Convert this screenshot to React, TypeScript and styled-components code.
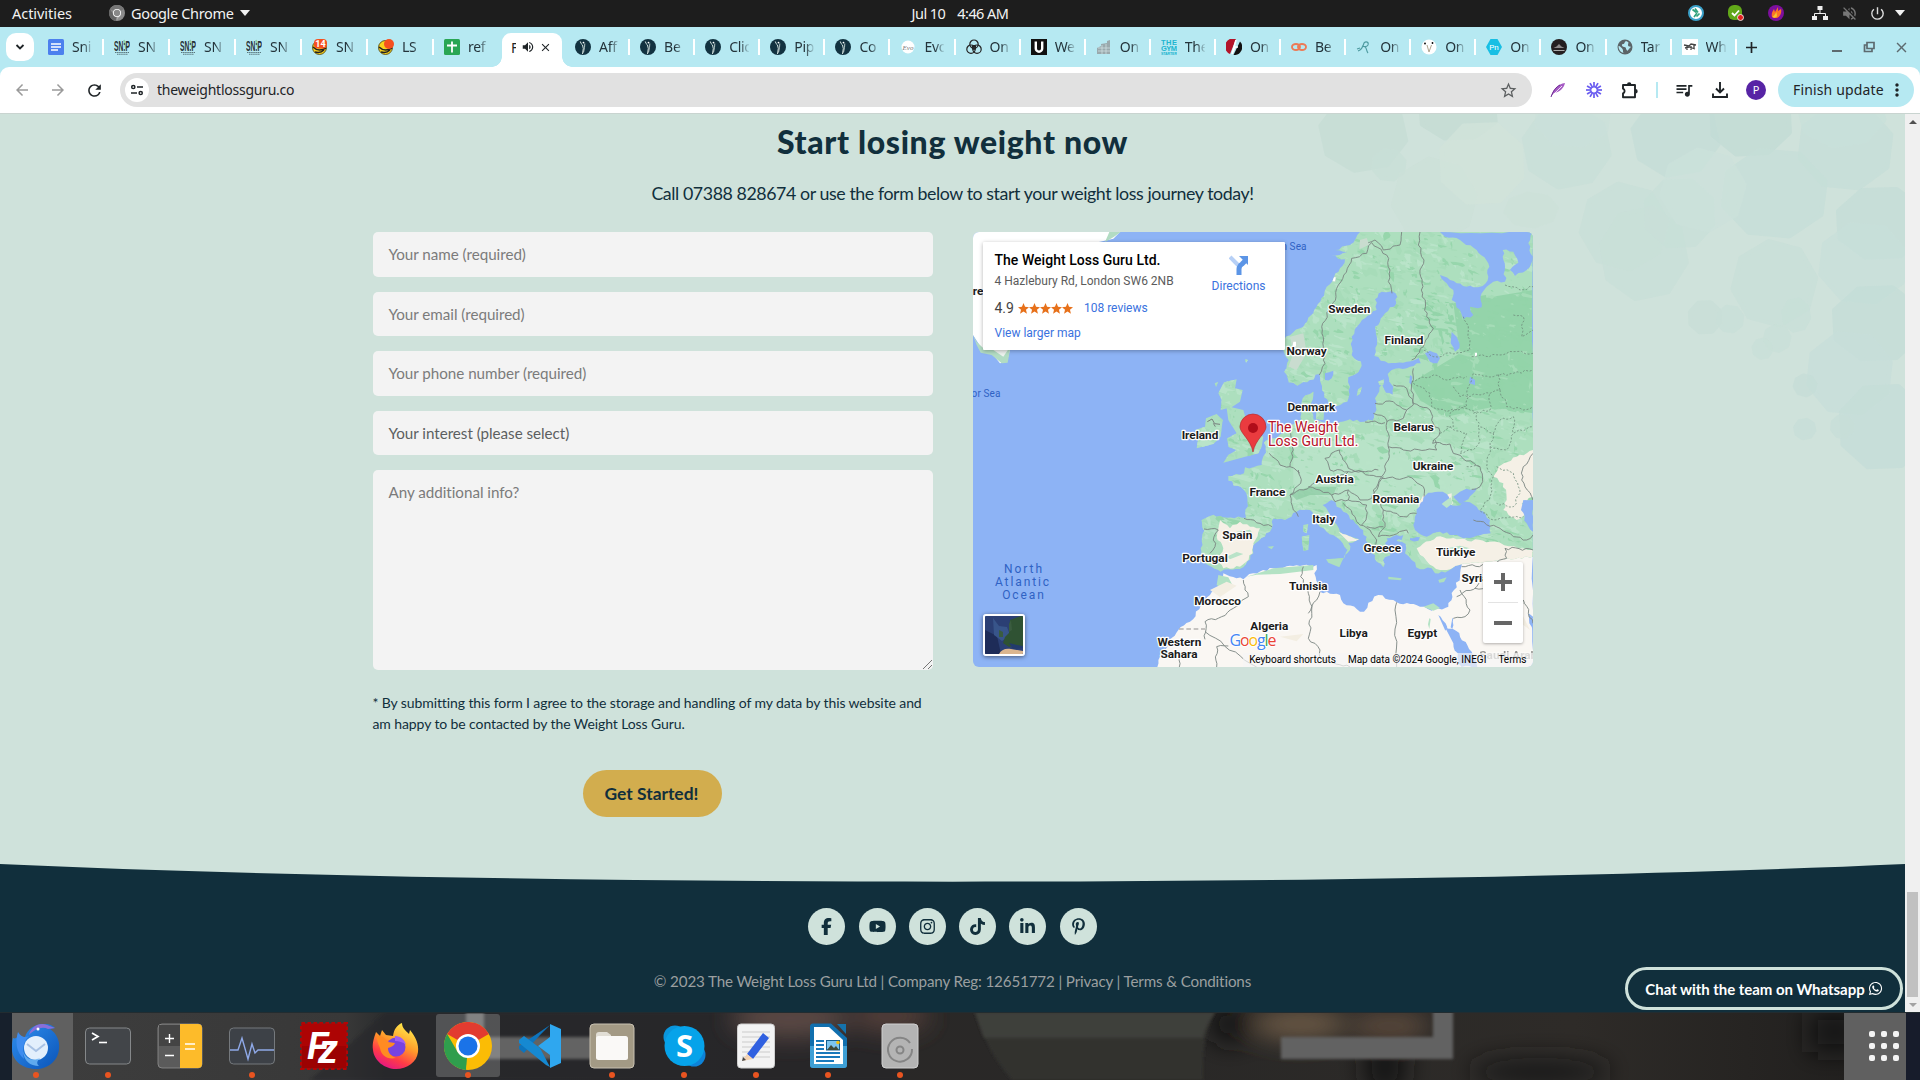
import React from "react";
import styled, { createGlobalStyle, css } from "styled-components";
import { FaFacebookF, FaYoutube, FaInstagram, FaTiktok, FaLinkedinIn, FaPinterestP, FaWhatsapp } from "react-icons/fa6";
import {
  MdArrowBack, MdArrowForward, MdRefresh, MdStarBorder, MdQueueMusic,
  MdMoreVert, MdVolumeUp, MdVolumeOff, MdClose, MdPublic, MdPowerSettingsNew,
} from "react-icons/md";

const mint = "#cfe2db";
const navy = "#112f3c";
const ui = `"Noto Sans", "Open Sans", sans-serif`;
const lato = `Lato, "Open Sans", sans-serif`;

const Global = createGlobalStyle`
  * { box-sizing: border-box; }
  body { margin: 0; overflow: hidden; background: #1d1d1d; }
  svg { display: block; flex: none; }
`;

const Screen = styled.div`
  width: 1920px; height: 1080px; display: flex; flex-direction: column; overflow: hidden;
`;

/* ---------- system bar ---------- */
const SystemBar = styled.header`
  height: 27px; flex: none; background: #1d1d1d; color: #f2f2f2; font: 400 14.5px ${ui};
  display: grid; grid-template-columns: 1fr auto 1fr; align-items: center; padding: 0 12px; padding-bottom: 1px;
`;
const SystemLeft = styled.div`display: flex; align-items: center;`;
const Activities = styled.span`width: 97px; letter-spacing: -0.05px;`;
const AppName = styled.span`margin: 0 6px 0 6px; letter-spacing: -0.35px;`;
const Clock = styled.div`display: flex; gap: 12px; letter-spacing: -0.55px;`;
const Tray = styled.div`display: flex; justify-content: flex-end; align-items: center;`;
const TraySlot = styled.span<{ $w: number }>`width: ${(p) => p.$w}px; display: flex; justify-content: center;`;
const Caret = styled.i`border: 5px solid transparent; border-top: 6px solid #f2f2f2; border-bottom: 0;`;

/* ---------- tab strip ---------- */
const Frame = styled.div`background: #b6e9f2; flex: none;`;
const TabStrip = styled.div`
  height: 40px; display: flex; padding-left: 6px; font: 400 14px ${ui}; color: #24343b;
`;
const TabSearch = styled.div`
  width: 28px; height: 28px; margin: 6px 4px 0 0; border-radius: 10px; background: #fff;
  display: flex; align-items: center; justify-content: center;
`;
const Tab = styled.div<{ $w: number; $sep: boolean }>`
  width: ${(p) => p.$w}px; flex: none; height: 16px; margin-top: 12px; padding-left: 10px;
  display: flex; align-items: center; gap: 8px; border-right: 2px solid ${(p) => (p.$sep ? "#fff" : "transparent")};
`;
const TabTitle = styled.span`
  width: 20px; overflow: hidden; white-space: nowrap; letter-spacing: -0.3px; line-height: 20px;
  mask-image: linear-gradient(90deg, #000 55%, transparent 105%);
`;
const ActiveTab = styled.div`
  width: 60px; height: 34px; margin: 6px 3px 0 2px; background: #fff; border-radius: 9px 9px 0 0; position: relative;
  display: flex; align-items: center; padding: 0 10px 6px 9px; justify-content: space-between; color: #1f2427;
  &::before, &::after {
    content: ""; position: absolute; bottom: 0; width: 10px; height: 10px;
  }
  &::before { left: -10px; background: radial-gradient(circle at 0 0, transparent 9.5px, #fff 10px); }
  &::after { right: -10px; background: radial-gradient(circle at 100% 0, transparent 9.5px, #fff 10px); }
`;
const Clip = styled.span`width: 5px; overflow: hidden;`;
const NewTab = styled.div`
  width: 30px; height: 40px; display: flex; align-items: center; justify-content: center;
`;
const WindowControls = styled.div`
  margin-left: auto; padding: 0 10px; display: flex; gap: 16px; align-items: center; color: #5d6a6f;
`;

/* ---------- toolbar ---------- */
const Toolbar = styled.div`
  height: 47px; background: #fff; border-radius: 9px 9px 0 0; border-bottom: 1px solid #c9d4d0;
  display: flex; align-items: center; padding: 0 6px 0 4px; font: 400 14px ${ui}; color: #1f2427;
`;
const ToolSlot = styled.div<{ $w?: number; $muted?: boolean }>`
  width: ${(p) => p.$w ?? 36}px; flex: none; display: flex; justify-content: center; align-items: center;
  color: ${(p) => (p.$muted ? "#9a9a9a" : "#1f2427")};
`;
const Omnibox = styled.div`
  width: 1412px; height: 34px; margin: 0 8px 0 8px; border-radius: 17px; background: #e1e1e1; flex: none;
  display: flex; align-items: center; padding: 0 14px 0 5px;
`;
const SiteInfo = styled.span`
  width: 24px; height: 24px; border-radius: 50%; background: #fff; margin-right: 8px;
  display: flex; align-items: center; justify-content: center;
`;
const Address = styled.span`flex: 1; letter-spacing: -0.25px; padding-bottom: 2px;`;
const Divider = styled.span`width: 2px; height: 16px; background: #b6e9f2; margin: 0 8px;`;
const Avatar = styled.span`
  width: 20px; height: 20px; border-radius: 50%; background: #5724a5; color: #fff; font: 400 11px/20px ${ui}; text-align: center;
`;
const UpdateButton = styled.div`
  width: 136px; height: 34px; margin-left: 4px; border-radius: 17px; background: #b6e9f2; flex: none;
  display: flex; align-items: center; justify-content: space-between; padding: 0 7px 0 15px; letter-spacing: 0.15px; white-space: nowrap;
`;
const UpdateText = styled.span`padding-bottom: 2px;`;

/* ---------- page ---------- */
const Viewport = styled.div`height: 898px; display: flex; flex: none;`;
const Page = styled.main`
  width: 1905px; height: 898px; background: ${mint}; position: relative; overflow: hidden; display: flex; flex-direction: column;
  font-family: ${lato}; color: ${navy};
`;
const Backdrop = styled.svg`position: absolute; right: 0; top: 0; filter: blur(.6px);`;
const Heading = styled.h2`
  margin: 7px 0 0; text-align: center; font: 900 32px/42px ${lato}; letter-spacing: 0.65px; position: relative;
`;
const Lead = styled.p`
  margin: 18px 0 0; text-align: center; font-size: 17.8px; line-height: 24px; letter-spacing: -0.42px; position: relative;
`;
const Columns = styled.section`
  display: grid; grid-template-columns: 560px 560px; gap: 40px; justify-content: center; margin-top: 27px; height: 632px; position: relative;
`;
const Form = styled.form`display: flex; flex-direction: column; gap: 15px;`;
const Field = styled.div<{ $dark?: boolean }>`
  height: 44.6px; flex: none; border-radius: 5px; background: #f3f3f3; color: ${(p) => (p.$dark ? "#5c5f61" : "#7b7b7b")};
  font-size: 15.2px; line-height: 44px; padding: 0 16px; letter-spacing: -0.03px;
`;
const Area = styled(Field)`
  height: 200px; position: relative; margin-bottom: 7px;
`;
const Grip = styled.svg`position: absolute; right: 1px; bottom: 1px;`;
const Consent = styled.p`margin: 0; font-size: 14px; line-height: 21px; letter-spacing: -0.1px; white-space: nowrap;`;
const Submit = styled.div`
  align-self: center; width: 139px; height: 47px; margin-top: 21px; border-radius: 24px; background: #d2ad4e;
  font-weight: 700; font-size: 17.4px; line-height: 47px; text-align: center; padding-right: 2px;
`;
const Footer = styled.footer`
  flex: 1; display: flex; flex-direction: column; align-items: center; position: relative;
`;
const FooterShape = styled.svg`position: absolute; inset: 0;`;
const Socials = styled.div`display: flex; gap: 13.3px; margin-top: 44px; position: relative;`;
const Social = styled.span`
  width: 37px; height: 37px; border-radius: 50%; background: ${mint}; color: ${navy};
  display: flex; align-items: center; justify-content: center; font-size: 17px;
`;
const Legal = styled.p`
  margin: 25px 0 0; color: #9b9fa0; font-size: 15.2px; line-height: 22px; letter-spacing: -0.15px; position: relative; white-space: nowrap;
`;
const ChatPill = styled.div`
  position: absolute; left: 1625px; top: 853px; width: 278px; height: 43px; border-radius: 22px; border: 3px solid ${mint};
  background: ${navy}; color: #fff; font: 700 15px ${lato}; letter-spacing: -0.04px; display: flex; align-items: center; justify-content: center; gap: 3px; white-space: nowrap;
`;
const Scrollbar = styled.div`
  width: 15px; background: #f0f0f0; display: flex; flex-direction: column; align-items: center; padding: 6px 0 5px;
`;
const Arrow = styled.i<{ $down?: boolean }>`
  border: 4px solid transparent;
  ${(p) => p.$down ? css`border-top-color: #a3a3a3; border-bottom: 0;` : css`border-bottom-color: #505050; border-top: 0;`}
`;
const Thumb = styled.div`width: 11px; height: 105px; margin: auto 0 6px; background: #c1c1c1;`;

/* ---------- map ---------- */
const MapFrame = styled.div`
  width: 560px; height: 435px; border-radius: 6px; overflow: hidden; position: relative; background: #8db3f5;
  font-family: Roboto, sans-serif;
`;
const PlaceCard = styled.div`
  position: absolute; left: 10px; top: 10px; width: 302px; height: 108px; background: #fff; box-shadow: 0 1px 4px rgba(0,0,0,.3);
  padding: 10px 19px 0 12px; display: flex; justify-content: space-between; border-radius: 1px;
`;
const PlaceText = styled.div`display: flex; flex-direction: column; white-space: nowrap;`;
const PlaceName = styled.b`font: 500 14px/17px Roboto; color: #000; letter-spacing: 0.03px;`;
const PlaceAddress = styled.span`font-size: 12px; line-height: 16px; margin-top: 4px; color: #5b5b5b;`;
const RatingRow = styled.div`display: flex; align-items: center; margin-top: 10px; font-size: 14px; line-height: 18px; color: #444;`;
const Stars = styled.span`display: flex; margin: 0 11px 0 4px;`;
const Blue = styled.span`font-size: 12px; color: #3a72de;`;
const LargerMap = styled(Blue)`margin-top: 9px; line-height: 15px;`;
const Directions = styled.div`display: flex; flex-direction: column; align-items: center; gap: 3px; padding-top: 2px;`;
const ZoomBox = styled.div`
  position: absolute; right: 10px; bottom: 24px; width: 40px; height: 81px; background: #fff; border-radius: 2px; box-shadow: 0 1px 3px rgba(0,0,0,.3);
`;
const Satellite = styled.div`
  position: absolute; left: 10px; bottom: 11px; width: 42px; height: 42px; border: 2px solid #fff; border-radius: 3px; box-shadow: 0 1px 4px rgba(0,0,0,.5); overflow: hidden;
`;
const MapCredits = styled.div`
  position: absolute; right: 0; bottom: 0; height: 14px; padding: 0 6px; background: rgba(245,245,245,.7); font-size: 10px; line-height: 14px; color: #000;
  display: flex; gap: 12px; white-space: nowrap;
`;
const Label = styled.text`
  font: 700 11.8px Roboto, sans-serif; fill: #1c1c1c; stroke: #fff; stroke-width: 2.4px; paint-order: stroke; text-anchor: middle; stroke-linejoin: round;
`;
const FadedLabel = styled(Label)`opacity: .45;`;
const SeaLabel = styled.text<{ $wide?: boolean }>`
  font: 400 ${(p) => (p.$wide ? 12 : 10)}px Roboto, sans-serif; fill: #2f62c4; text-anchor: middle; letter-spacing: ${(p) => (p.$wide ? "1.9px" : "0.1px")};
`;
const PinLabel = styled.text`
  font: 400 14px Roboto, sans-serif; fill: #b5122a; stroke: #fff; stroke-width: 2.6px; paint-order: stroke; stroke-linejoin: round;
`;
const GoogleMark = styled.text`font: 500 16px "Open Sans", sans-serif; stroke: #fff; stroke-width: 1.6px; paint-order: stroke;`;

/* ---------- dock ---------- */
const Dock = styled.nav`height: 68px; flex: none; position: relative; background: #2b2b2b; display: flex; overflow: hidden;`;
const Wallpaper = styled.svg`position: absolute; inset: 0;`;
const DockCell = styled.div<{ $active?: boolean }>`
  width: 64px; height: 63px; margin: 2px 4px; flex: none; display: flex; flex-direction: column; align-items: center; padding-top: 8px; position: relative;
  border-radius: 3px; background: ${(p) => (p.$active ? "rgba(255,255,255,.2)" : "none")};
`;
const RunDot = styled.i`width: 6px; height: 6px; border-radius: 50%; background: #e95420; margin-top: 2px; flex: none;`;
const AppGrid = styled.div`
  margin: 19px 21px 0 auto; display: grid; grid-template-columns: repeat(3, 6px); grid-auto-rows: 6px; gap: 6px; position: relative;
`;
const GridDot = styled.i`background: #f4f4f4; border-radius: 2px;`;

/* ---------- favicons ---------- */
const Ico = ({ children, s = 16, v = "0 0 16 16" }: { children: React.ReactNode; s?: number; v?: string }) => (
  <svg width={s} height={s} viewBox={v}>{children}</svg>
);
const Docs = () => <Ico><rect width="16" height="16" rx="1.5" fill="#4c80ee" /><path d="M3 5h10M3 8h10M3 11h7" stroke="#fff" strokeWidth="1.5" /></Ico>;
const Snip = () => (
  <Ico>
    <path d="M10 1l2 9" stroke="#8fd0a5" strokeWidth="1.5" />
    <text x="0" y="11.500" fontFamily="Liberation Sans" fontWeight="700" fontSize="14" textLength="16" lengthAdjust="spacingAndGlyphs" fill="#263136">SN:P</text>
    <path d="M1 13.5h14M3 15.3h11" stroke="#59777d" strokeWidth="1.1" strokeDasharray="1.5 .6" />
  </Ico>
);
const Duck = ({ n }: { n?: string }) => (
  <Ico>
    <circle cx="7.5" cy="8.5" r="7" fill="#f7d21c" stroke="#4b3c0b" strokeWidth=".8" />
    <path d="M1 8c4 4 8 4 13 1M3 13c4 1 7 0 9-2" stroke="#222" strokeWidth="1.5" fill="none" />
    {n ? <rect x="2" y="0" width="13" height="9.500" rx="4" fill="#f5501f" /> : <circle cx="11" cy="5" r="5" fill="#f5501f" />}
    {n && <text x="8.500" y="8" textAnchor="middle" fontFamily="Roboto" fontWeight="700" fontSize="9" fill="#fff">{n}</text>}
  </Ico>
);
const Sheets = () => <Ico><rect width="16" height="16" rx="1.5" fill="#2aa653" /><path d="M8 2.5v11M3 6.5h10" stroke="#fff" strokeWidth="1.8" /></Ico>;
const Guru = () => (
  <Ico><circle cx="8" cy="8" r="8" fill="#123240" /><path d="M5.300 2.500q.5 2.500 2.200 3.500l.8 3.500-.8 5.500" stroke="#d8e6e2" strokeWidth="1" fill="none" /><path d="M9.800 4.500l-.3 4-1 5" stroke="#d8e6e2" strokeWidth=".8" fill="none" /><circle cx="8.500" cy="3.600" r=".9" fill="#fff" /></Ico>
);
const Evo = () => <Ico><circle cx="8" cy="8" r="6.5" fill="#fff" /><text x="8" y="10.5" textAnchor="middle" fontFamily="Liberation Serif" fontStyle="italic" fontSize="7" fill="#777">Evo</text></Ico>;
const Trio = () => <Ico><g fill="none" stroke="#222" strokeWidth="1.2"><circle cx="8" cy="5.2" r="4.2" /><circle cx="5" cy="10.2" r="4.2" /><circle cx="11" cy="10.2" r="4.2" /><circle cx="8" cy="8.5" r="1.8" /></g></Ico>;
const Under = () => <Ico><rect width="16" height="16" fill="#111" /><path d="M4.8 2.5v7a3.2 3.2 0 0 0 6.4 0v-7" stroke="#fff" strokeWidth="2.4" fill="none" /></Ico>;
const Building = () => <Ico><path d="M1 15V9l4-2V5l6-1V2l3-1v14z" fill="#9aa9ad" /><path d="M2 9h12M2 12h12M6 6v9M10 5v10" stroke="#d4e5e8" strokeWidth=".7" /></Ico>;
const Gym = () => (
  <Ico>
    <g fontFamily="Liberation Sans" fontWeight="700" fill="#21b5cf">
      <text x="0" y="6" fontSize="7.5" textLength="16">THE</text><text x="0" y="12.3" fontSize="7.5" textLength="16">GYM</text><text x="0" y="16" fontSize="3.6" textLength="16">STARTER</text>
    </g>
  </Ico>
);
const Split = () => <Ico><path d="M10 0A8 8 0 0 0 4 15z" fill="#b3142a" /><path d="M14 2.5A8 8 0 0 1 7.500 16z" fill="#111" /><path d="M10 1L6 15l3-7h3" stroke="#fff" strokeWidth="1.6" fill="none" /></Ico>;
const Be = () => <Ico><g fill="none" stroke="#ec7a55" strokeWidth="1.9"><ellipse cx="5" cy="8" rx="4" ry="3" /><ellipse cx="11" cy="8" rx="4" ry="3" /></g></Ico>;
const Sketch = () => <Ico><path d="M2 12c3-1 5-4 6-8 2-2 5-1 4 2-1 2-4 2-6 1M9 8c2 1 1 4 3 6M4 9l-3 1" stroke="#4d9aa0" strokeWidth="1.1" fill="none" /></Ico>;
const Vee = () => <Ico><circle cx="8" cy="8" r="7.500" fill="#fff" /><path d="M6 6l2 7 2.500-7" stroke="#b0a58f" fill="none" /><circle cx="4" cy="4.500" r=".9" /><circle cx="11.500" cy="4" r=".9" /></Ico>;
const Pn = () => <Ico><path d="M4.500 0h7L16 8l-4.500 8h-7L0 8z" fill="#18bfe4" strokeLinejoin="round" /><text x="8" y="11" textAnchor="middle" fontFamily="Roboto" fontSize="8" fill="#fff">Pn</text></Ico>;
const Dark = () => <Ico><circle cx="8" cy="8" r="8" fill="#241f20" /><path d="M2.500 9l3-1.500L8 5l2.500 2.500 3 1.500z" fill="#8c8889" /><path d="M2.500 11.500h11" stroke="#aaa" fill="none" /></Ico>;
const Globe = () => (
  <Ico><circle cx="8" cy="8" r="7.500" fill="#5b6467" /><path d="M9 2c-2 1-1 3-3 3S5 8 7 8s2 1 2 2 1 0 1 2c2-1 2-3 4-4-1-1-3 0-3-2s1-2 0-3zM1.500 7c2 0 3 2 4 3s0 3 1 4C3 13 1.500 10 1.500 7z" fill="#b6e9f2" /></Ico>
);
const Scrap = () => <Ico><rect width="16" height="16" fill="#fff" /><path d="M2 6l5 1 2-2 5 1M3 9l4-1 6 2M5 6v5M9 7v4M12 6v3" stroke="#444" strokeWidth="1.300" fill="none" /></Ico>;

const leftTabs: [React.ReactNode, string][] = [
  [<Docs />, "Sni"], [<Snip />, "SN"], [<Snip />, "SN"], [<Snip />, "SN"], [<Duck n="14" />, "SN"], [<Duck />, "LS"], [<Sheets />, "ref"],
];
const rightTabs: [React.ReactNode, string][] = [
  [<Guru />, "Aff"], [<Guru />, "Be"], [<Guru />, "Clic"], [<Guru />, "Pip"], [<Guru />, "Co"], [<Evo />, "Evo"], [<Trio />, "On"], [<Under />, "We"],
  [<Building />, "On"], [<Gym />, "The"], [<Split />, "On"], [<Be />, "Be"], [<Sketch />, "On"], [<Vee />, "On"], [<Pn />, "On"], [<Dark />, "On"],
  [<Globe />, "Tar"], [<Scrap />, "Wh"],
];

/* ---------- map drawing ---------- */
const europe =
  "M300,36L270,75L225,90L262,96L215,108L255,118L240,145L222,172L200,200L192,228L160,280L120,325L78,350L68,385L86,420L72,455L86,487L112,497L150,480L178,462L186,510L205,550L232,558L262,545L270,500L265,472L300,448L303,425L275,405L275,350L300,310L350,270L345,238L365,215L395,213L412,230L410,250L375,280L345,320L352,360L343,408L385,430L440,425L476,414L482,430L440,445L395,450L383,462L388,485L400,500L398,525L378,518L366,492L345,535L350,570L338,602L300,606L270,598L230,612L185,606L160,598L150,560L160,515L128,535L118,570L125,602L95,615L70,640L40,655L12,668L18,698L5,735L-20,742L-45,742L-48,760L-95,768L-95,782L-50,808L-38,835L-42,893L-100,893L-150,888L-175,900L-167,932L-178,985L-180,1012L-155,1036L-118,1055L-50,1042L-20,1000L-20,975L35,925L40,895L75,900L110,875L150,870L165,900L200,935L240,960L262,990L250,1018L270,990L265,970L298,958L240,935L210,885L188,855L215,840L250,875L300,925L320,950L325,980L345,1005L350,1025L370,1042L375,1012L392,1005L375,970L395,960L425,965L437,972L435,1000L455,1020L480,1048L515,1045L525,1060L565,1052L598,1035L612,1030L720,1020L819,1010L819,36Z";
const africa =
  "M-308,1341L-300,1310L-275,1270L-245,1230L-210,1205L-182,1168L-150,1125L-125,1100L-110,1060L-50,1078L-20,1060L40,1045L120,1038L170,1035L163,1060L180,1115L240,1125L250,1150L312,1175L325,1148L355,1125L410,1147L480,1160L515,1172L565,1160L582,1110L600,1070L605,1025L700,1010L819,1000L819,1341Z";
const waters = [
  "M555,50L600,60L650,90L685,130L685,170L668,198L640,202L590,190L540,165L560,190L580,210L575,240L600,270L610,298L640,285L630,260L665,262L665,220L700,185L735,185L735,140L728,90L760,95L775,128L750,150L765,168L800,150L819,110L805,70L819,36L540,36Z",
  "M460,915L470,880L480,850L505,818L535,815L560,822L570,840L552,848L590,857L618,845L650,860L690,900L692,940L640,952L600,950L540,935L500,950L465,930Z",
  "M580,830L600,815L650,803L625,838L600,852Z",
  "M790,840L819,840L819,935L800,910L783,870Z",
  "M555,1222L588,1232L635,1295L652,1341L605,1341L580,1270Z",
  "M535,1185L542,1190L562,1222L556,1232Z", "M577,1195L580,1195L577,1226L572,1222Z",
  "M806,1180L819,1190L819,1232L808,1210Z",
  "M495,400L510,392L530,400L540,415L532,430L510,425Z", "M575,335L590,350L598,385L585,395L572,370Z",
  "M630,470L645,480L645,495L628,490Z", "M450,955L480,952L475,962L450,960Z",
  "M195,460L220,452L215,475L195,480Z", "M450,465L457,470L455,495L448,488Z", "M380,955L430,945L425,960L385,965Z",
];
const isles = [
  "M-108,487L-70,478L-75,505L-52,510L-60,545L-85,562L-50,570L-40,605L-15,635L10,650L5,680L-5,700L-50,712L-110,728L-95,705L-70,690L-95,680L-98,655L-70,640L-95,600L-100,565L-118,570L-115,540L-125,520Z",
  "M-162,595L-130,582L-112,600L-118,650L-140,672L-190,685L-185,650L-195,630L-165,620Z",
  "M170,570L192,575L190,600L168,598Z", "M294,508L306,500L300,522L290,528Z", "M355,485L372,478L370,495L358,495Z",
  "M130,915L145,912L140,940L130,935Z", "M125,950L148,945L145,990L130,992Z", "M198,1018L250,1014L238,1042L205,1028Z",
  "M385,1070L425,1075L422,1081L385,1078Z", "M535,1080L560,1072L552,1086L538,1088Z", "M22,980L42,978L35,988Z",
  "M-45,418L-36,420L-42,428Z", "M-136,490L-125,485L-132,500Z",
];
const beige = [
  "M-120,900L-90,925L-60,905L-30,920L0,925L-20,970L-22,1000L-60,1040L-110,1045L-130,1020L-110,985L-130,950Z",
  "M470,985L530,950L590,958L690,965L819,990L819,1030L600,1040L540,1050L500,1025L480,1005Z",
  "M819,690L770,710L715,740L700,770L730,790L740,840L730,870L770,900L800,880L785,850L819,830Z",
  "M540,845L575,820L580,850L560,860Z", "M475,850L490,825L500,835L478,880Z", "M235,935L298,958L265,965Z",
];
const borders = [
  "M178,465L195,430L190,380L188,310L215,260L228,230L235,195L262,145L275,115L320,100L335,68L380,105L390,150L385,185L396,220",
  "M325,68L345,60L370,90L420,75L425,36", "M480,36L475,75L492,120L480,150L488,220L500,290L520,325L490,380L455,420",
  "M460,445L455,490L460,555L440,570L400,545L345,550", "M400,495L440,505L460,550L510,570L520,610L540,635L518,670L570,672",
  "M340,580L375,592L385,640L385,720L365,770", "M315,606L375,608", "M440,570L430,595L380,605",
  "M385,680L430,690L530,690L525,660", "M570,672L580,700L660,740L668,785L660,800L635,808",
  "M365,770L350,770L265,745L238,690L195,715L210,750L265,755L355,750", "M365,770L340,810L370,870L430,890L470,880",
  "M365,775L430,775L445,770L490,800L492,830", "M265,810L300,840L335,835L370,770", "M265,810L215,825L180,810L145,800",
  "M115,750L122,790L90,825L100,870L115,890", "M90,825L150,800L180,780L215,785L265,755", "M28,700L60,735L90,740L120,760",
  "M92,640L100,690L90,740", "M215,825L225,845L265,840L265,810", "M250,850L285,890L300,915L330,930L350,960L330,1000",
  "M265,840L320,855L318,900L305,915", "M370,870L368,900L375,920L355,950L400,945L440,930L445,940", "M320,920L345,925L370,920",
  "M-48,895L0,910L36,920", "M-168,927L-125,930L-138,950L-135,980L-150,1000",
  "M-50,1080L-45,1110L-35,1130L-80,1165L-115,1190L-165,1205L-165,1258", "M-165,1235L-30,1330L-10,1341", "M-130,1341L-130,1280L-95,1278",
  "M130,1040L122,1070L145,1120L155,1170L145,1255L180,1290L180,1315L270,1341", "M145,1180L170,1140L180,1115", "M410,1147L405,1170L410,1341", "M-242,1310L-242,1341",
  "M590,1130L650,1100L670,1080", "M600,1110L630,1170L615,1190L580,1195", "M605,1040L690,1035L740,1015L735,985L819,990",
  "M640,900L720,925L760,950L800,960L819,945", "M790,1140L819,1210", "M645,1105L680,1110L790,1150", "M819,700L790,740L785,780L819,840",
];
const dashes = [
  "M455,485L520,465L560,480L620,470", "M610,290L625,330L630,390L520,410L490,390", "M635,410L720,405L760,395L819,400",
  "M460,490L510,520L515,560L560,575L620,560L625,500L640,460L700,470L760,460L819,450", "M735,195L780,210L819,200", "M760,285L790,290L785,350L819,330",
  "M540,640L580,620L570,580L600,560L650,580L655,620L700,640L690,680L740,690L760,640L819,620", "M580,500L600,530L690,520L720,510L740,560L790,570L819,560",
  "M600,700L640,690L660,660L655,620M700,640L720,600L760,590L760,640M690,680L680,740L700,770L690,830L660,870L700,900L790,890",
  "M620,740L660,740M710,740L760,760L780,820L760,860L710,850M560,620L620,640L600,700M720,510L715,460M640,580L690,570L690,520",
];
const labels: [string, number, number][] = [
  ["Sweden", 268, 268], ["Norway", 140, 394], ["Finland", 432, 361], ["Denmark", 154, 562], ["Belarus", 461, 622], ["Ireland", -180, 646],
  ["Ukraine", 519, 739], ["Austria", 224, 778], ["France", 22, 817], ["Romania", 408, 838], ["Italy", 191, 898], ["Spain", -68, 946],
  ["Greece", 367, 985], ["Türkiye", 587, 997], ["Portugal", -165, 1015], ["Syria", 645, 1075], ["Tunisia", 145, 1099], ["Morocco", -127, 1144],
  ["Algeria", 28, 1219], ["Libya", 281, 1240], ["Egypt", 487, 1240], ["Western", -242, 1267], ["Sahara", -243, 1303],
];
/* Deterministic scatter of vegetation patches. */
const patches = (() => {
  let seed = 11;
  const r = () => ((seed = (seed * 16807) % 2147483647) / 2147483647);
  return Array.from({ length: 2300 }, () => {
    const x = -200 + r() * 1020, y = 40 + r() * 990, size = 3 + r() * r() * 19;
    const n = 9, a0 = r() * 6, stretch = 0.6 + r() * 1.6;
    const pts = Array.from({ length: n }, (_, i) => {
      const a = a0 + (i / n) * 6.283, d = size * (0.2 + r() * 1.15);
      return `${(x + Math.cos(a) * d * stretch).toFixed(0)},${(y + (Math.sin(a) * d) / stretch + Math.cos(a) * d * 0.4).toFixed(0)}`;
    }).join(" ");
    const forest = x > 470 && y > 230 && y < 570;
    const fill = forest ? (r() < 0.72 ? "#93d4a9" : "#a5dcb7") : r() < 0.22 ? "#97d6ac" : r() < 0.5 ? "#b9e4c9" : "#a7dcb9";
    return { pts, fill };
  });
})();
/* Breaks straight runs into small irregular steps so coasts and borders read as natural lines. */
const wobble = (d: string) => {
  const nums = d.split(/(?=[ML])/);
  let px = 0, py = 0, out = "", k = 3;
  nums.forEach((t) => {
    const closed = t.endsWith("Z");
    const [x, y] = t.slice(1).replace("Z", "").split(",").map(Number);
    if (t[0] === "L") {
      const len = Math.hypot(x - px, y - py), n = Math.min(9, Math.floor(len / 10));
      for (let i = 1; i < n; i++) {
        k = (k * 16807) % 2147483647;
        const o = ((k % 1000) / 1000 - 0.5) * 9, f = i / n;
        out += `L${(px + (x - px) * f + (o * (y - py)) / len).toFixed(1)},${(py + (y - py) * f - (o * (x - px)) / len).toFixed(1)}`;
      }
    }
    out += `${t[0]}${x},${y}${closed ? "Z" : ""}`;
    px = x; py = y;
  });
  return out;
};

const MapArt = () => (
  <svg width="560" height="435" viewBox="0 0 560 435">
    <g transform="translate(287 -12) scale(.33333)">
      <clipPath id="land"><path d={wobble(europe)} />{isles.map((d) => <path key={d} d={d} />)}</clipPath>
      <path d="M-861,36H-420L-440,56L-500,70L-530,120L-700,300L-750,390L-760,425L-780,430L-800,405L-830,395L-845,370L-861,345Z" fill="#fff" />
      <path d="M-452,36L-418,36L-440,52L-465,66ZM-861,345L-850,365L-830,385L-750,390L-757,428L-775,430L-805,405L-838,398L-850,375Z" fill="#b2dcc3" />
      <path d="M-800,390L-755,388L-770,410Z" fill="#eef3ef" />
      <path d={wobble(africa)} fill="#faf7f3" />
      <path d={wobble(europe)} fill="#addfbe" />
      {isles.map((d) => <path key={d} d={d} fill="#addfbe" />)}
      <g clipPath="url(#land)">
        <path d="M580,250L819,210V580L700,560L560,590L480,540L450,490L600,400Z" fill="#94d4aa" />
        <path d="M100,620L520,660L640,700L660,800L400,900L100,800Z" fill="#b8e3c8" />
        {patches.map((p, i) => <polygon key={i} points={p.pts} fill={p.fill} />)}
        {beige.map((d) => <path key={d} d={wobble(d)} fill="#f5f0e6" />)}
        <path d="M90,350L130,340L140,400L110,450L85,440L100,400ZM215,170l14,0l-3,16l-10,-4ZM300,60l20,-6l8,20l-30,14Z" fill="#c9dccf" />
        <path d="M215,172h12l-2,12h-8ZM100,365h8v14h-10ZM645,398h6v12h-6Z" fill="#fff" />
        <path d="M90,820L150,800L230,800L220,825L150,825L110,840Z" fill="#8ccba2" opacity=".7" />
        <path d="M-100,1010l30,-14l20,6l-40,16zM-70,935l40,-6l10,14l-36,4zM560,985l40,-8l30,8l-50,10zM470,1000l20,10l20,26l-24,-6z" fill="#b9e3c8" />
      </g>
      <path d="M-125,1065L-95,1072L-80,1100L-110,1108L-130,1095ZM-40,1070L40,1045L160,1035L160,1050L60,1062L-10,1064ZM490,1160l30,-10l20,14l-20,8ZM508,1195l4,2l-4,30l-4,-14Z" fill="#b3e2c4" />
      <path d="M-150,1110l50,-25l30,12l-50,34ZM60,1250l70,-8l-20,22ZM700,1100l80,70l30,60l-40,-30Z" fill="#f3eee2" />
      {waters.map((d) => <path key={d} d={wobble(d)} fill="#8db3f5" />)}
      <path d="M552,846L572,832L578,850L560,864L545,852Z" fill="#bae4c9" />
      <g fill="none" stroke="#7b8581" strokeWidth="2.7" strokeLinejoin="round">{borders.map((d) => <path key={d} d={wobble(d)} />)}</g>
      <path d="M-243,1227L-165,1227" stroke="#b5b3b0" strokeWidth="5" strokeDasharray="14 8" />
      <g fill="none" stroke="#6f8d7b" strokeWidth="2.400" strokeDasharray="6 5">{dashes.map((d) => <path key={d} d={wobble(d)} />)}</g>
      <path d="M-158,605l14,-8l8,14l16,2M-140,610l6,10" fill="none" stroke="#777f7c" strokeWidth="3" />
    </g>
    <SeaLabel x="13" y="165">or Sea</SeaLabel>
    <SeaLabel x="321" y="18">n Sea</SeaLabel>
    <SeaLabel $wide x="51" y="341">North</SeaLabel>
    <SeaLabel $wide x="50" y="354">Atlantic</SeaLabel>
    <SeaLabel $wide x="51" y="367">Ocean</SeaLabel>
    <Label x="5" y="62.500">re</Label>
    {labels.map(([t, x, y]) => <Label key={t} x={x / 3 + 287} y={y / 3 - 8}>{t}</Label>)}
    <FadedLabel x="540" y="427">Saudi Arabia</FadedLabel>
    <path d="M280,220c-2,-12 -13,-19 -13,-25a13,13 0 0 1 26,0c0,6 -11,13 -13,25z" fill="#ea3b3f" stroke="#b92c30" strokeWidth=".7" />
    <circle cx="280" cy="196" r="5" fill="#b10d1a" />
    <PinLabel x="295" y="200">The Weight</PinLabel>
    <PinLabel x="295" y="214">Loss Guru Ltd.</PinLabel>
    <GoogleMark x="256.500" y="414" textLength="47">
      <tspan fill="#4285f4">G</tspan><tspan fill="#ea4335">o</tspan><tspan fill="#fbbc05">o</tspan><tspan fill="#4285f4">g</tspan><tspan fill="#34a853">l</tspan><tspan fill="#ea4335">e</tspan>
    </GoogleMark>
  </svg>
);

const MapPanel = () => (
  <MapFrame>
    <MapArt />
    <PlaceCard>
      <PlaceText>
        <PlaceName>The Weight Loss Guru Ltd.</PlaceName>
        <PlaceAddress>4 Hazlebury Rd, London SW6 2NB</PlaceAddress>
        <RatingRow>
          4.9
          <Stars>{[0, 1, 2, 3, 4].map((i) => <svg key={i} width="11" height="11" viewBox="0 0 24 24"><path d="M12 0l3.400 8.300 8.600.700-6.600 5.600 2.100 8.600L12 18.500l-7.500 4.700 2.100-8.600L0 9l8.600-.7z" fill="#e7711b" /></svg>)}</Stars>
          <Blue>108 reviews</Blue>
        </RatingRow>
        <LargerMap>View larger map</LargerMap>
      </PlaceText>
      <Directions>
        <svg width="20" height="22" viewBox="0 0 20 22"><path d="M1 3l8 8" stroke="#b7d0f6" strokeWidth="4" /><path d="M10 21v-6q0-3 3-5l4-4" stroke="#5c95e6" strokeWidth="5" fill="none" /><path d="M10 2h9v9z" fill="#5c95e6" /></svg>
        <Blue>Directions</Blue>
      </Directions>
    </PlaceCard>
    <Satellite>
      <svg width="38" height="38" viewBox="0 0 38 38">
        <rect width="38" height="38" fill="#2b3f74" /><path d="M0 14L12 20 16 38H0z" fill="#1e2c58" /><path d="M8 2l6 8 8 1 3 8-8 6-8-6z" fill="#38558a" />
        <path d="M25 4L36 0h2v31l-8-2-6 2-6-4 2-6 4-4z" fill="#2f5233" /><path d="M14 14l4 2v5h-4zM24 8l2-4 1 10-3 2z" fill="#3a5c3f" /><path d="M14 38c2-4 6-6 12-5l12 2v3z" fill="#dbb68f" /><path d="M24 27l8 2 6 1v2l-10 1z" fill="#223b6c" />
      </svg>
    </Satellite>
    <MapCredits><span>Keyboard shortcuts</span><span>Map data ©2024 Google, INEGI</span><span>Terms</span></MapCredits>
    <ZoomBox>
      <svg width="40" height="81" viewBox="0 0 40 81"><path d="M20 11v18M11 20h18M11 61h18" stroke="#666" strokeWidth="4" /><path d="M5 40.500h30" stroke="#e3e3e3" /></svg>
    </ZoomBox>
  </MapFrame>
);

/* ---------- page backdrop ---------- */
const octagon = (cx: number, cy: number, rx: number, ry: number, a = 0.3) =>
  Array.from({ length: 8 }, (_, i) => `${cx + rx * Math.cos(a + (i * Math.PI) / 4)},${cy + ry * Math.sin(a + (i * Math.PI) / 4)}`).join(" ");
const bubbles: [number, number, number, number, string][] = [
  [160, 70, 110, 115, "#c6ddd5"], [400, 10, 100, 80, "#c4dbd3"], [225, 165, 40, 45, "#c9dfd7"], [340, 270, 105, 125, "#cce0d8"], [675, 110, 110, 125, "#c9dfd8"],
  [460, 160, 108, 125, "#d2e3da"], [690, 20, 95, 90, "#cbe0da"], [585, 300, 65, 50, "#cde1d9"], [950, 80, 110, 120, "#c5ddd7"], [1140, 30, 105, 110, "#c2dbd5"],
  [1380, 110, 120, 130, "#c6ded8"], [820, 350, 110, 130, "#c9dfd8"], [870, 430, 110, 140, "#c9dfd8"], [960, 310, 90, 105, "#c8dfd8"], [1200, 250, 135, 135, "#c6ded8"],
  [1020, 240, 105, 122, "#cce1db"], [1370, 10, 110, 100, "#c9e0da"], [1470, 340, 115, 110, "#c4ddd7"], [1425, 460, 112, 122, "#c8dfda"], [1200, 520, 106, 128, "#c8dfd8"],
  [1255, 615, 33, 48, "#c8dfd8"], [1025, 622, 40, 48, "#c8ded7"], [1088, 627, 31, 38, "#c9dfd8"], [1207, 685, 31, 38, "#c9dfd8"], [1170, 716, 22, 28, "#c9dfd8"],
  [1460, 640, 115, 115, "#c4ddd7"], [1390, 790, 108, 125, "#c7deda"], [1278, 826, 26, 30, "#c6ddd7"], [1277, 957, 24, 28, "#c7ded8"], [1475, 950, 112, 130, "#c5ddd8"], [1372, 950, 26, 32, "#c7ded8"],
];

/* ---------- dock icons ---------- */
const D = ({ children }: { children: React.ReactNode }) => <svg width="48" height="48" viewBox="0 0 48 48">{children}</svg>;
const Thunderbird = () => (
  <D>
    <defs><linearGradient id="tb" x1="0" y1="0" x2="1" y2="1"><stop offset="0" stopColor="#2f8fef" /><stop offset="1" stopColor="#0b54b8" /></linearGradient></defs>
    <path d="M1 16c2 1 4 0 5-2 2 4 4 3 7 1 2-8 11-14 20-13 5 0 8 2 10 4l-5 1c7 5 10 12 9 20-1 12-11 20-23 20C10 47 0 38 0 27c0-4 0-7 1-11z" fill="url(#tb)" />
    <path d="M6 10c-3 10-2 20 6 27-2-9-1-17 5-23-4 2-8 1-11-4z" fill="#3d8cf0" />
    <path d="M17 13c2-8 10-13 18-10l8 3-7 1c-6-3-13 0-19 6z" fill="#8a6fd8" /><circle cx="26" cy="7" r="1.500" fill="#fff" />
    <circle cx="24" cy="26" r="12" fill="#e3effc" /><path d="M15 22l9 7 9-7" stroke="#a9c2e4" strokeWidth="2" fill="none" />
    <path d="M11 29c3 9 10 10 17 7-4 4-3 6-1 8-9 0-15-5-16-15z" fill="#6cb5f5" opacity=".85" />
  </D>
);
const Terminal = () => <D><rect x="1.500" y="6" width="45" height="36" rx="4" fill="#424549" stroke="#85888a" /><path d="M8 11l6 3.500-6 3.500" stroke="#fff" strokeWidth="1.700" fill="none" /><path d="M15 20.500h8" stroke="#fff" strokeWidth="1.600" /></D>;
const Calc = () => (
  <D><rect x="2" y="2" width="44" height="44" rx="4" fill="#5b5b5b" stroke="#909090" strokeWidth=".8" /><path d="M3 3h21v21H3z" fill="#444" /><path d="M24 2h18a4 4 0 0 1 4 4v36a4 4 0 0 1-4 4H24z" fill="#fdbb2a" />
    <path d="M9 16.500h9M13.500 12v9M9 33.500h9M29 22h10M29 27h10" stroke="#fff" strokeWidth="1.400" /></D>
);
const Monitor = () => <D><rect x="1.500" y="6" width="45" height="36" rx="4" fill="#3d4147" stroke="#75797d" /><path d="M2 28h8l4-12 6 21 4-15 3 9 3-3h16" stroke="#8fa9e8" strokeWidth="1.400" fill="none" /></D>;
const FileZilla = () => (
  <D><rect x="1.500" y="1.500" width="45" height="45" fill="#b30505" stroke="#b30505" strokeWidth="3" strokeDasharray="3.500 2.500" /><rect x="2" y="2" width="44" height="44" fill="#ad0404" />
    <path d="M2 24h44v22H2z" fill="#8c0000" opacity=".5" /><text x="7" y="37" fontFamily="Liberation Sans" fontWeight="700" fontStyle="italic" fontSize="39" textLength="22" lengthAdjust="spacingAndGlyphs" fill="#fff">F</text>
    <text x="18" y="41" fontFamily="Liberation Sans" fontWeight="700" fontStyle="italic" fontSize="41" textLength="20" lengthAdjust="spacingAndGlyphs" fill="#fff">z</text></D>
);
const Firefox = () => (
  <D>
    <defs><linearGradient id="fx" x1=".8" y1="0" x2=".3" y2="1"><stop offset="0" stopColor="#fff44f" /><stop offset=".45" stopColor="#ff9a2a" /><stop offset=".75" stopColor="#ff3b47" /><stop offset="1" stopColor="#e31587" /></linearGradient></defs>
    <path d="M4 10l4 4 2-6 4 5 7 1c1-7 4-11 9-13 0 5 4 8 7 11l1-4c6 7 9 15 8 22-1 10-11 17-22 17S2 39 1 28C0 21 2 16 4 10z" fill="url(#fx)" />
    <circle cx="24" cy="25" r="9.500" fill="#7743e0" /><path d="M4 14c5-1 9 2 12 6l7 1c-1 3-4 4-7 5 0 5 3 8 8 10-9 2-15-3-16-10-2-4-3-8-4-12z" fill="#ff8b22" /><path d="M23 14c6 0 10 4 11 9-3-3-7-4-11-4z" fill="#a05ff0" />
  </D>
);
const Chrome = ({ s = 48, gray }: { s?: number; gray?: boolean }) => (
  <svg width={s} height={s} viewBox="0 0 48 48">
    <circle cx="24" cy="24" r="24" fill={gray ? "#8b8b8b" : "#fbbc05"} />
    <path d="M24 24L3.200 12A24 24 0 0 1 44.800 12z" fill={gray ? "#777" : "#e23b30"} /><path d="M24 12h20.800L24 14z" fill={gray ? "#777" : "#e23b30"} />
    <path d="M3.200 12L13.600 30 24 36 22 48A24 24 0 0 1 3.200 12z" fill={gray ? "#666" : "#2f9e4d"} /><path d="M22 48l12.400-18L24 24z" fill={gray ? "#aaa" : "#fbbc05"} />
    <circle cx="24" cy="24" r="12" fill="#fff" /><circle cx="24" cy="24" r="9.500" fill={gray ? "#888" : "#1a73e8"} />
  </svg>
);
const VsCode = () => <D><path d="M34 3l-10 10L8 31l-5-4v-3L34 3z" fill="#0d74bd" /><path d="M3 18l5-4 16 12 10 19-4-2L3 21z" fill="#1689d1" /><path d="M34 2l11 5v34l-11 5V33L22 24l12-9z" fill="#2fa7ef" /></D>;
const Files = () => <D><rect x="2" y="2" width="44" height="44" rx="4" fill="#a39a85" stroke="#c8c1b1" /><path d="M8 13q0-3 3-3h8l4 3v7H8z" fill="#e1ded5" /><rect x="8" y="14" width="32" height="24" rx="2.500" fill="#faf9f7" /></D>;
const Skype = () => <D><circle cx="15" cy="15" r="11.500" fill="#0a95dc" /><circle cx="34" cy="33" r="11.500" fill="#0d83d8" /><circle cx="24.500" cy="24" r="20" fill="#06a3ea" /><text x="24.500" y="35" textAnchor="middle" fontFamily="Open Sans" fontWeight="700" fontSize="31" fill="#fff">S</text></D>;
const Editor = () => (
  <D><rect x="5.500" y="2" width="37" height="44" rx="3.500" fill="#f3f3f3" stroke="#cfcfcf" /><path d="M10 10h28M10 15h28M10 20h28M10 25h28M10 30h28M10 35h28" stroke="#cbcbcb" />
    <path d="M31 11l6 5-16 21-6-5z" fill="#3060e0" /><path d="M15 32l6 5-11 2z" fill="#f3d3b4" /><path d="M10 39l1-4 3 3z" fill="#444" /></D>
);
const Writer = () => (
  <D><path d="M9 1.500h18L43 16v27a3 3 0 0 1-3 3H9a3 3 0 0 1-3-3V5a3 3 0 0 1 3-3.500z" fill="#116fae" /><path d="M6 24h37v19a3 3 0 0 1-3 3H9a3 3 0 0 1-3-3z" fill="#3e9fd5" /><path d="M33 2h9v10z" fill="#1572ab" /><path d="M10 5h15l14 13v24H10z" fill="#fff" />
    <path d="M12 19h8M12 23h8M12 27h8M12 31h24M12 35h24M12 39h18" stroke="#1a79bb" strokeWidth="2" /><rect x="22.500" y="18.500" width="13" height="9.500" fill="#7cc5ef" stroke="#16608f" /><path d="M23 28l4-5 3 3 2-2 3 4z" fill="#3f4a39" /><circle cx="34" cy="20.500" r="1.800" fill="#f4c20d" /></D>
);
const Disks = () => <D><rect x="6" y="2" width="36" height="44" rx="4" fill="#b4b4b4" stroke="#d0d0d0" /><path d="M34 18a12 12 0 1 0 2 6" stroke="#858585" strokeWidth="2" fill="none" transform="translate(0 3)" /><circle cx="24" cy="28" r="3.500" fill="none" stroke="#858585" strokeWidth="2" /></D>;

const dockApps: { icon: React.ReactNode; run?: boolean; active?: boolean }[] = [
  { icon: <Thunderbird />, run: true }, { icon: <Terminal />, run: true }, { icon: <Calc /> }, { icon: <Monitor />, run: true }, { icon: <FileZilla /> },
  { icon: <Firefox /> }, { icon: <Chrome />, run: true, active: true }, { icon: <VsCode /> }, { icon: <Files />, run: true }, { icon: <Skype />, run: true },
  { icon: <Editor />, run: true }, { icon: <Writer />, run: true }, { icon: <Disks />, run: true },
];

const DockBackground = () => (
  <Wallpaper width="1920" height="68" viewBox="0 0 1920 68">
    <defs>
      <filter id="soft" x="-20%" y="-60%" width="140%" height="220%"><feGaussianBlur stdDeviation="12" /></filter>
      <filter id="fine" x="-5%" y="-30%" width="110%" height="160%"><feGaussianBlur stdDeviation="1.800" /></filter>
      <linearGradient id="w" x1="0" x2="1"><stop offset="0" stopColor="#3e3e3e" /><stop offset=".18" stopColor="#383838" /><stop offset=".2" stopColor="#2b2d2e" /><stop offset=".4" stopColor="#2a2827" /><stop offset=".6" stopColor="#292827" /><stop offset=".82" stopColor="#2e2b28" /><stop offset="1" stopColor="#1e1d1c" /></linearGradient>
    </defs>
    <rect width="1920" height="68" fill="url(#w)" />
    <path d="M385 0H900V68H310z" fill="#26282a" opacity=".6" filter="url(#fine)" />
    <g filter="url(#soft)">
      <ellipse cx="790" cy="6" rx="60" ry="20" fill="#5c4a45" /><ellipse cx="890" cy="4" rx="40" ry="16" fill="#54403a" /><ellipse cx="1230" cy="12" rx="22" ry="20" fill="#171615" />
      <ellipse cx="1300" cy="12" rx="48" ry="16" fill="#6b5844" /><ellipse cx="1390" cy="14" rx="40" ry="14" fill="#5d4b3c" /><ellipse cx="1385" cy="55" rx="22" ry="30" fill="#161616" /><ellipse cx="1540" cy="60" rx="70" ry="14" fill="#1e1d1c" /><rect x="1810" y="0" width="50" height="40" fill="#171615" />
    </g>
    <path d="M975 0h240q-14 26-12 68H1012q-26-30-37-68z" fill="#31322f" filter="url(#fine)" />
    <path d="M975 0h240q-10 14-12 26H984z" fill="#43443f" opacity=".75" filter="url(#fine)" />
    <g filter="url(#fine)"><path d="M466 0h18v25h112v22h-130z" fill="#646464" /><path d="M1281 25h152V-5h20v52h-172z" fill="#626262" /></g>
    <rect x="12" width="61" height="68" fill="#606060" /><rect x="1844" width="62" height="68" fill="#606060" />
    <rect width="12" height="68" fill="#17202c" /><rect x="1906" width="14" height="68" fill="#171c2b" />
    <rect width="1920" height="1" fill="#222c30" />
  </Wallpaper>
);

export default function App() {
  return (
    <Screen>
      <Global />
      <SystemBar>
        <SystemLeft>
          <Activities>Activities</Activities><Chrome s={16} gray /><AppName>Google Chrome</AppName><Caret />
        </SystemLeft>
        <Clock><span>Jul 10</span><span>4:46 AM</span></Clock>
        <Tray>
          <TraySlot $w={56}><Ico><circle cx="8" cy="8" r="7" fill="#fff" stroke="#3aa0c9" strokeWidth="2" /><path d="M4.500 4.500l4 3M7 3.500l3 4M9 8l-3 4M11.500 8.500l-3 3" stroke="#31a27d" strokeWidth="1.700" fill="none" /></Ico></TraySlot>
          <TraySlot $w={24}><Ico><rect x="0" y="0" width="14" height="15" rx="6" fill="#62a819" /><path d="M4 8l2.500 2.500L11 5.500" stroke="#fff" strokeWidth="1.800" fill="none" /><circle cx="12.500" cy="12.500" r="3" fill="#e02020" stroke="#fff" strokeWidth=".8" /></Ico></TraySlot>
          <TraySlot $w={56}><Ico><circle cx="8" cy="8" r="8" fill="#7d0f9d" /><path d="M4 12c-1-4 1-6 2-8l1 3 3-5v4l3-2c1 4-1 8-4 9-2 0-4 0-5-1z" fill="#fb7425" /><path d="M4.500 12c2-2 2-2 4-5l.500 4c-1 2-3 2-4.500 1z" fill="#f5c52d" /></Ico></TraySlot>
          <TraySlot $w={32}><Ico><path d="M5.500 1h5v4h-5zM0 11h5v4H0zM11 11h5v4h-5z" fill="#eee" /><path d="M8 5v3M2.500 11V8.500h11V11" stroke="#eee" fill="none" /></Ico></TraySlot>
          <TraySlot $w={26}><MdVolumeOff size={17} color="#777" /></TraySlot>
          <TraySlot $w={30}><MdPowerSettingsNew size={17} color="#ddd" /></TraySlot>
          <TraySlot $w={16}><Caret /></TraySlot>
        </Tray>
      </SystemBar>

      <Frame>
        <TabStrip>
          <TabSearch><svg width="10" height="10" viewBox="0 0 10 10"><path d="M1.500 3L5 6.500 8.500 3" stroke="#1f2427" strokeWidth="1.800" fill="none" /></svg></TabSearch>
          {leftTabs.map(([icon, t], i) => <Tab key={i} $w={66} $sep={i < 6}>{icon}<TabTitle>{t}</TabTitle></Tab>)}
          <ActiveTab><Clip>F</Clip><MdVolumeUp size={14} /><MdClose size={13} /></ActiveTab>
          {rightTabs.map(([icon, t], i) => <Tab key={i} $w={65.1} $sep>{icon}<TabTitle>{t}</TabTitle></Tab>)}
          <NewTab><svg width="11" height="11" viewBox="0 0 11 11"><path d="M5.500 0v11M0 5.500h11" stroke="#1f2427" strokeWidth="1.700" /></svg></NewTab>
          <WindowControls>
            <svg width="16" height="16" viewBox="0 0 16 16"><path d="M3 12h10" stroke="#5d6a6f" strokeWidth="2" /></svg>
            <svg width="16" height="16" viewBox="0 0 16 16" fill="none" stroke="#5d6a6f" strokeWidth="1.700"><path d="M6 3.500h7v6H6zM6 6H3.500v6.500H11V9.500" /></svg>
            <MdClose size={17} />
          </WindowControls>
        </TabStrip>
        <Toolbar>
          <ToolSlot $muted><MdArrowBack size={18} /></ToolSlot>
          <ToolSlot $muted><MdArrowForward size={18} /></ToolSlot>
          <ToolSlot><MdRefresh size={19} /></ToolSlot>
          <Omnibox>
            <SiteInfo><svg width="14" height="12" viewBox="0 0 14 12" fill="none" stroke="#1f2427" strokeWidth="1.500"><circle cx="3.300" cy="3" r="1.600" /><path d="M7 3h6M1 9h6" /><circle cx="10.700" cy="9" r="1.600" /></svg></SiteInfo>
            <Address>theweightlossguru.co</Address>
            <MdStarBorder size={19} color="#5c5f60" />
          </Omnibox>
          <ToolSlot><Ico><path d="M1 15C3 7 8 2 15 1c-1 5-5 9-11 10z" fill="#a65cc4" /><path d="M1 15L12 4" stroke="#fff" strokeWidth=".8" /><path d="M1 15C3 9 6 5 10 3" stroke="#6b2b91" fill="none" /></Ico></ToolSlot>
          <ToolSlot><svg width="18" height="18" viewBox="-9 -9 18 18">{Array.from({ length: 12 }, (_, i) => <path key={i} d="M0 -3V-8" stroke="#6a5df0" strokeWidth="1.700" transform={`rotate(${i * 30})`} />)}<circle r="3.200" fill="none" stroke="#6a5df0" strokeWidth="1.200" /></svg></ToolSlot>
          <ToolSlot><svg width="18" height="18" viewBox="0 0 18 18"><path d="M2 4h12v12.200H2v-3.700a2.600 2.600 0 0 0 0-4.800z" fill="none" stroke="#1f2427" strokeWidth="1.900" strokeLinejoin="round" /><path d="M6 3.500a2.200 2.200 0 0 1 4.400 0zM14.500 8a2.200 2.200 0 0 1 0 4.400z" fill="#1f2427" /></svg></ToolSlot>
          <Divider />
          <ToolSlot><MdQueueMusic size={20} /></ToolSlot>
          <ToolSlot><svg width="16" height="16" viewBox="0 0 16 16" fill="none" stroke="#1f2427" strokeWidth="1.900"><path d="M8 0v10M4 6.500L8 10.500 12 6.500M1 11.500V15h14v-3.500" /></svg></ToolSlot>
          <ToolSlot><Avatar>P</Avatar></ToolSlot>
          <UpdateButton><UpdateText>Finish update</UpdateText><MdMoreVert size={20} /></UpdateButton>
        </Toolbar>
      </Frame>

      <Viewport>
        <Page>
          <Backdrop width="605" height="380" viewBox="0 12 1530.650 1140" preserveAspectRatio="none">
            {bubbles.map(([x, y, rx, ry, c], i) => <polygon key={i} points={octagon(x, y, rx, ry, 0.2 + (i % 4) * 0.15)} fill={c} opacity=".75" stroke={c} strokeWidth="12" strokeLinejoin="round" />)}
          </Backdrop>
          <Heading>Start losing weight now</Heading>
          <Lead>Call 07388 828674 or use the form below to start your weight loss journey today!</Lead>
          <Columns>
            <Form>
              <Field>Your name (required)</Field>
              <Field>Your email (required)</Field>
              <Field>Your phone number (required)</Field>
              <Field $dark>Your interest (please select)</Field>
              <Area>Any additional info?<Grip width="9" height="9" viewBox="0 0 9 9"><path d="M0 9L9 0M5 9l4-4" stroke="#666" strokeWidth=".9" /></Grip></Area>
              <Consent>* By submitting this form I agree to the storage and handling of my data by this website and<br />am happy to be contacted by the Weight Loss Guru.</Consent>
              <Submit>Get Started!</Submit>
            </Form>
            <MapPanel />
          </Columns>
          <Footer>
            <FooterShape width="1905" height="150" viewBox="0 0 1905 150"><path d="M0 0C520 23.500 1385 23.500 1905 0V150H0Z" fill={navy} /></FooterShape>
            <Socials>
              <Social><FaFacebookF /></Social><Social><FaYoutube /></Social><Social><FaInstagram /></Social>
              <Social><FaTiktok /></Social><Social><FaLinkedinIn /></Social><Social><FaPinterestP /></Social>
            </Socials>
            <Legal>© 2023 The Weight Loss Guru Ltd | Company Reg: 12651772 | Privacy | Terms &amp; Conditions</Legal>
          </Footer>
          <ChatPill>Chat with the team on Whatsapp<FaWhatsapp size={15} /></ChatPill>
        </Page>
        <Scrollbar><Arrow /><Thumb /><Arrow $down /></Scrollbar>
      </Viewport>

      <Dock>
        <DockBackground />
        {dockApps.map((a, i) => <DockCell key={i} $active={a.active}>{a.icon}{a.run && <RunDot />}</DockCell>)}
        <AppGrid>{Array.from({ length: 9 }, (_, i) => <GridDot key={i} />)}</AppGrid>
      </Dock>
    </Screen>
  );
}
